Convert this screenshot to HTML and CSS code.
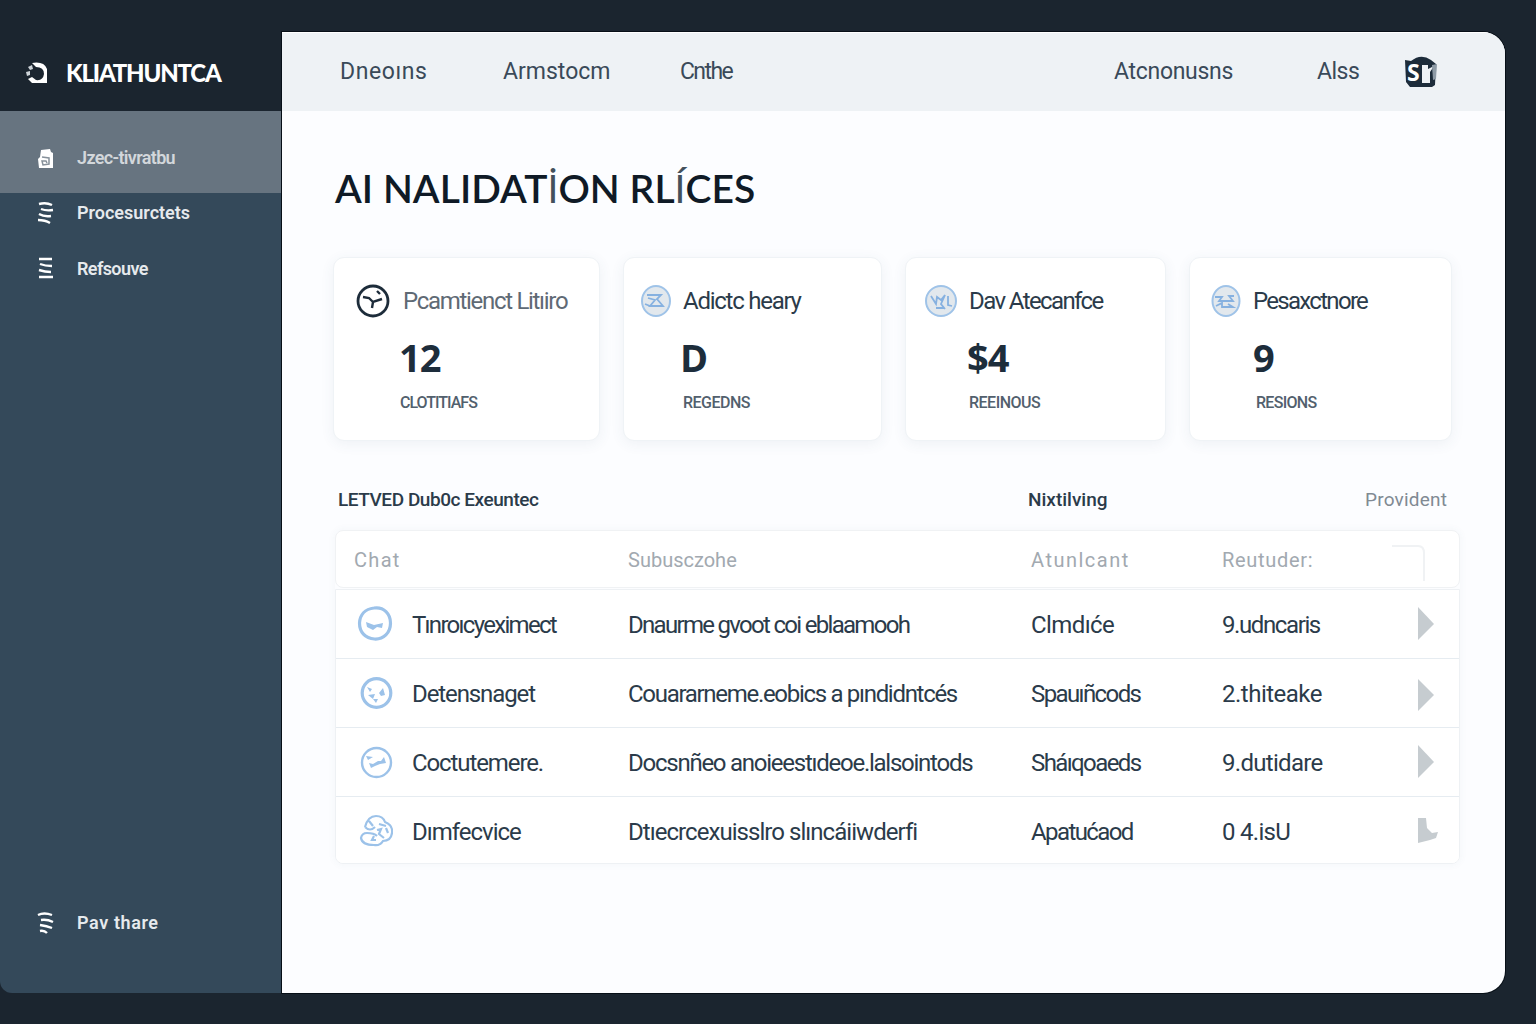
FILE: index.html
```html
<!DOCTYPE html>
<html lang="en">
<head>
    <meta charset="UTF-8">
    <meta name="viewport" content="width=device-width, initial-scale=1.0">
    <title>AI Nalidation</title>
    <link rel="stylesheet" href="styles.css">
</head>
<body>
    <div class="app">
        <aside class="sidebar">
            <div class="brand">
                <svg class="brand-icon" width="22" height="24" viewBox="0 0 22 24"><path fill="#fff" d="M6 2q12-2 15 6v14H6l-4-4 4-2 4 3q7 1 8-6 0-7-8-7z"/><path fill="#cdd3d8" d="m2 6 4-2 1 4-3 1zM0 11l4-1v4l-3 1z"/></svg>
                <span class="brand-name">KLIATHUNTCA</span>
            </div>
            <nav class="menu">
                <a class="menu-item active">
                    <svg width="18" height="22" viewBox="0 0 18 22"><path fill="#fff" d="M4 3 13 2l1 3 2 1v15H2l-1-9 2-2z"/><path fill="none" stroke="#87919b" stroke-width="1.5" d="M5 10l7 1v6l-6 1-1-4h4l1 2"/></svg>
                    <span class="t-user">Jzec-tivratbu</span>
                </a>
                <a class="menu-item">
                    <svg width="18" height="24" viewBox="0 0 18 24"><path class="wave" d="M2 3q7-2 13 1M4 8q5 2 12 1M2 13q5 3 12 2M1 19q7 0 12 3"/></svg>
                    <span class="t-proc">Procesurctets</span>
                </a>
                <a class="menu-item">
                    <svg width="18" height="24" viewBox="0 0 18 24"><path class="wave" d="M2 2h13M3 7q5 2 12 2M2 13q6 2 12 2M2 20h14"/></svg>
                    <span class="t-ref">Refsouve</span>
                </a>
                <a class="menu-item bottom">
                    <svg width="18" height="24" viewBox="0 0 18 24"><path class="wave" d="M1 4q6-3 14 0M4 9q6-1 12 2M3 14q7 1 12 3M3 20q4-1 7 2"/></svg>
                    <span class="t-pay">Pav thare</span>
                </a>
            </nav>
        </aside>

        <div class="window">
            <header class="topbar">
                <a class="nav-1">Dneoıns</a>
                <a class="nav-2">Armstocm</a>
                <a class="nav-3">Cnthe</a>
                <a class="nav-4">Atcnonusns</a>
                <a class="nav-5">Alss</a>
                <svg class="avatar" width="34" height="32" viewBox="0 0 34 32"><path fill="#1d2c3a" d="M1 4 7 5q10-8 20-1l5 4-1 21-3 2H6l-4-5z"/><text x="3" y="25" class="avatar-text">S</text><path fill="#eef2f5" d="M18 9h6v4l6-3-4 6v11h-8z"/><path fill="#8e9ba6" d="m28 9 5-1-1 15-3 1z"/></svg>
            </header>

            <main class="content">
                <h1>AI NALIDAT<span class="thin">İ</span>ON RL<span class="thin">Í</span>CES</h1>

                <section class="cards">
                    <div class="card">
                        <div class="card-head">
                            <svg width="34" height="34" viewBox="0 0 34 34"><circle cx="17" cy="17" r="15" fill="none" stroke="#1d2c3a" stroke-width="2.8"/><path fill="none" stroke="#1d2c3a" stroke-width="2.4" d="m7 13 6 1 4 4 9-3M17 18l-1 6M21 7l3 3"/></svg>
                            <span class="c-1 soft">Pcamtienct Litıiro</span>
                        </div>
                        <div class="value">12</div>
                        <div class="unit u-1">CLOTITIAFS</div>
                    </div>
                    <div class="card">
                        <div class="card-head">
                            <svg width="32" height="34" viewBox="0 0 32 34"><ellipse class="disc" cx="16" cy="17" rx="14" ry="15"/><path class="mark" d="M7 11h14l-4 4 6 7H10l5-6-7-2M5 20l5 2"/></svg>
                            <span class="c-2">Adictc heary</span>
                        </div>
                        <div class="value v-2">D</div>
                        <div class="unit u-2">REGEDNS</div>
                    </div>
                    <div class="card">
                        <div class="card-head">
                            <svg width="34" height="34" viewBox="0 0 34 34"><circle class="disc" cx="17" cy="17" r="15"/><path class="mark" d="m7 12 5 8 1-7 4 3 4-5-4 9 4 5M24 12v9l4 1M12 24h8"/></svg>
                            <span class="c-3">Dav Atecanfce</span>
                        </div>
                        <div class="value">$4</div>
                        <div class="unit u-3">REEINOUS</div>
                    </div>
                    <div class="card">
                        <div class="card-head">
                            <svg width="32" height="34" viewBox="0 0 32 34"><ellipse class="disc" cx="16" cy="17" rx="13.500" ry="15"/><path class="mark" d="M5 13h7l-3 4h14l-4-5h5M6 22l6-3v4h11l-5-3"/></svg>
                            <span class="c-4">Pesaxctnore</span>
                        </div>
                        <div class="value">9</div>
                        <div class="unit u-4">RESIONS</div>
                    </div>
                </section>

                <div class="section-head">
                    <h2 class="s-1">LETVED Dub0c Exeuntec</h2>
                    <h2 class="s-2">Nixtilving</h2>
                    <span class="s-3">Provident</span>
                </div>

                <section class="table">
                    <div class="row head">
                        <span class="h-1">Chat</span>
                        <span class="h-2">Subusczohe</span>
                        <span class="h-3">Atunlcant</span>
                        <span class="h-4">Reutuder:</span>
                        <svg class="corner" width="38" height="44" viewBox="0 0 38 44"><path fill="none" stroke="#f0f2f4" stroke-width="2" d="M0 8h26q6 0 6 7v28"/></svg>
                    </div>
                    <div class="rows">
                        <div class="row">
                            <div class="name">
                                <svg width="36" height="36" viewBox="0 0 36 36"><path class="ring" d="M17 2C27 .5 33.500 8 33.500 17c0 10-7 16.500-16 16C8 32.500 2.500 26 2.500 17 3 9 8 3 17 2z"/><path class="blob" d="m9 16 8 3 9-2-1 5-5-1-4 3-6-3z"/></svg>
                                <span class="a-1">Tınroıcyeximect</span>
                            </div>
                            <span class="b-1">Dnaurme gvoot coi eblaamooh</span>
                            <span class="d-1">Clmdıće</span>
                            <span class="e-1">9.udncaris</span>
                            <svg class="arrow" width="22" height="34" viewBox="0 0 22 34"><path d="M2 0v33l16-16z"/></svg>
                        </div>
                        <div class="row">
                            <div class="name">
                                <svg width="36" height="36" viewBox="0 0 36 36"><circle class="ring" cx="19.500" cy="18" r="14.300"/><path class="blob" d="m10 12 5 2-2 3zM11 20l7-1-2 5zM16 24h5l-2 4zM22 18l4-5 2 7-4 1z"/></svg>
                                <span class="a-2">Detensnaget</span>
                            </div>
                            <span class="b-2">Couararneme.eobics a pındidntcés</span>
                            <span class="d-2">Spauıñcods</span>
                            <span class="e-2">2.thiteake</span>
                            <svg class="arrow low" width="22" height="34" viewBox="0 0 22 34"><path d="M2 1v32l16-16z"/></svg>
                        </div>
                        <div class="row">
                            <div class="name">
                                <svg width="36" height="36" viewBox="0 0 36 36"><circle class="ring thin-ring" cx="19.500" cy="18.500" r="14.500"/><path class="blob" d="m9 12 7 1-5 3zM12 19l4 1 5-3h3l3-4 2 6-6 1-5 2-4 2z"/></svg>
                                <span class="a-3">Coctutemere.</span>
                            </div>
                            <span class="b-3">Docsnñeo anoieestıdeoe.lalsointods</span>
                            <span class="d-3">Sháıqoaeds</span>
                            <span class="e-3">9.dutidare</span>
                            <svg class="arrow" width="22" height="34" viewBox="0 0 22 34"><path d="M2 0v33l16-16z"/></svg>
                        </div>
                        <div class="row">
                            <div class="name">
                                <svg width="36" height="36" viewBox="0 0 36 36"><path class="ring small-ring" d="M8 14Q11 3 19 3q7 0 9 6 8 3 7 11-1 8-9 8-3 5-9 4-12 0-13-7 1-5 6-5 7 0 10 3M8 14q5 5 10 0M12 8l4 5M22 11l7 2M20 17l4-1-2 5 5 4M29 15l2 5M17 23l-2 4h4"/></svg>
                                <span class="a-4">Dımfecvice</span>
                            </div>
                            <span class="b-4">Dtıecrcexuisslro slıncáiiwderfi</span>
                            <span class="d-4">Apatućaod</span>
                            <span class="e-4">0 4.isU</span>
                            <svg class="arrow" width="22" height="34" viewBox="0 0 22 34"><path d="M2 4h8l1 10 5 5 6-1-2 6-6 2-12 3z"/></svg>
                        </div>
                    </div>
                </section>
            </main>
        </div>
    </div>
</body>
</html>
```

FILE: styles.css
```css
* {
    box-sizing: border-box;
}
body {
    margin: 0;
    height: 1024px;
    background: #1b252f;
    font-family: Roboto, "Liberation Sans", sans-serif;
    color: #2b3b4a;
    overflow: hidden;
}
.app {
    display: flex;
    width: 1505px;
    height: 993px;
    padding-top: 32px;
}
svg {
    display: block;
    flex: none;
}
span, a {
    white-space: nowrap;
}

/* sidebar */
.sidebar {
    width: 282px;
    display: flex;
    flex-direction: column;
}
.brand {
    height: 79px;
    display: flex;
    align-items: center;
    padding: 2px 0 0 26px;
    gap: 18px;
}
.brand-name {
    font-family: Lato, sans-serif;
    font-size: 24px;
    font-weight: 900;
    letter-spacing: -1.2px;
    color: #fff;
}
.menu {
    flex: 1;
    display: flex;
    flex-direction: column;
    gap: 16px;
    background: #34495a;
    border-bottom-left-radius: 12px;
}
.menu-item {
    height: 40px;
    padding-left: 37px;
    display: flex;
    align-items: center;
    gap: 22px;
    color: #e6eaed;
    font-size: 18px;
    font-weight: 600;
}
.menu-item span {
    padding-bottom: 2px;
}
.menu-item.active {
    height: 82px;
    padding-top: 12px;
    margin-bottom: -16px;
    background: #677480;
    color: #d3d7db;
}
.menu-item.bottom {
    margin-top: auto;
    margin-bottom: 50px;
}
.t-user { letter-spacing: -0.65px; }
.t-ref { letter-spacing: -0.6px; }
.t-pay { letter-spacing: 0.6px; }
.wave {
    fill: none;
    stroke: #fff;
    stroke-width: 2.4;
}

/* window */
.window {
    flex: 1;
    background: #fcfdff;
    border-radius: 0 22px 22px 0;
    box-shadow: 0 0 0 1px #070f17;
    overflow: hidden;
}
.topbar {
    height: 79px;
    background: #eef2f5;
    border-top: 1px solid #fff;
    display: grid;
    grid-template-columns: 163px 177px 434px 203px 87px 34px;
    align-items: center;
    padding: 0 0 1px 58px;
    font-size: 23px;
    color: #3a4a59;
}
.nav-1 { letter-spacing: 0.6px; }
.nav-3 { letter-spacing: -1.6px; }
.nav-4 { letter-spacing: -0.3px; }
.nav-5 { letter-spacing: -0.5px; }
.avatar-text {
    font-family: "Open Sans", sans-serif;
    font-weight: 700;
    font-size: 23px;
    fill: #fff;
}
.content {
    padding: 52px 0 0 51px;
}
h1 {
    margin: 0;
    height: 94px;
    padding-left: 2px;
    font-family: Lato, sans-serif;
    font-size: 39px;
    font-weight: 600;
    line-height: 51px;
    letter-spacing: 0.05px;
    color: #0f1a26;
    white-space: nowrap;
}
.thin {
    font-weight: 400;
    color: #43505c;
}

/* cards */
.cards {
    display: grid;
    grid-template-columns: 267px 259px 261px 263px;
    column-gap: 23px;
    height: 184px;
}
.card {
    background: #fff;
    border: 1px solid #eff3f6;
    border-radius: 11px;
    box-shadow: 0 3px 14px rgba(60, 90, 120, 0.07);
    padding: 26px 0 0 18px;
}
.card:first-child {
    padding-left: 22px;
}
.card:nth-child(2) {
    padding-left: 16px;
}
.card:last-child {
    padding-left: 20px;
}
.card-head {
    display: flex;
    align-items: center;
    height: 34px;
    font-size: 24px;
}
.card-head span {
    margin-left: 11px;
}
.card .soft {
    margin-left: 13px;
    color: #5f6a75;
}
.c-1 { letter-spacing: -1.3px; }
.c-2 { letter-spacing: -1.25px; }
.c-3 { letter-spacing: -1.6px; }
.c-4 { letter-spacing: -1.7px; }
.disc {
    fill: #e2e8ed;
    stroke: #9fc3e8;
    stroke-width: 2;
}
.mark {
    fill: none;
    stroke: #86b1e0;
    stroke-width: 1.8;
}
.value {
    margin: 11px 0 0 43px;
    font-family: "Open Sans", sans-serif;
    font-size: 38px;
    font-weight: 700;
    line-height: 56px;
    height: 56px;
    letter-spacing: -1px;
    color: #1d2d3b;
}
.v-2 {
    margin-left: 40px;
}
.unit {
    margin-left: 44px;
    margin-top: 8px;
    font-size: 16px;
    line-height: 20px;
    font-weight: 500;
    color: #52606d;
}
.u-1 { letter-spacing: -1px; }
.u-2 { letter-spacing: -0.5px; margin-left: 43px; }
.u-3 { letter-spacing: -0.5px; margin-left: 45px; }
.u-4 { letter-spacing: -0.7px; margin-left: 46px; }

/* table */
.section-head {
    height: 89px;
    display: grid;
    grid-template-columns: 690px 337px auto;
    padding: 47px 0 0 5px;
    line-height: 24px;
    font-size: 19px;
}
.section-head h2 {
    margin: 0;
    font-size: 19px;
    font-weight: 500;
    white-space: nowrap;
}
.section-head .s-1 {
    letter-spacing: -0.45px;
}
.s-3 {
    color: #808a93;
    letter-spacing: 0.2px;
}
.table {
    width: 1125px;
    margin-left: 2px;
    font-size: 24px;
    border-radius: 8px;
    box-shadow: 0 0 8px rgba(60, 90, 120, 0.05);
}
.row {
    display: grid;
    grid-template-columns: 292px 403px 191px 194px auto;
    align-items: center;
    height: 69px;
    background: #fff;
    border-bottom: 1px solid #e6ecf1;
}
.head {
    height: 58px;
    border: 1px solid #f0f2f4;
    border-radius: 8px;
    font-size: 20px;
    padding-top: 2px;
    margin-bottom: 1px;
    color: #a2a9b0;
}
.h-1 {
    padding-left: 18px;
    letter-spacing: 1.3px;
}
.h-3 { letter-spacing: 1.5px; }
.h-4 { letter-spacing: 0.7px; }
.corner {
    margin-left: -24px;
}
.rows {
    border: 1px solid #eef1f4;
    border-radius: 0 0 8px 8px;
    overflow: hidden;
    height: 275px;
}
.rows .row > span, .name span {
    padding-top: 1px;
}
.rows .row:last-child {
    border: 0;
    height: 68px;
}
.name {
    display: flex;
    align-items: center;
    padding-left: 21px;
}
.name span {
    margin-left: 19px;
}
.a-1 { letter-spacing: -1.7px; }
.a-2 { letter-spacing: -1.1px; }
.a-3 { letter-spacing: -1.1px; }
.a-4 { letter-spacing: -1px; }
.b-1 { letter-spacing: -1.7px; }
.b-2 { letter-spacing: -1.3px; }
.b-3 { letter-spacing: -1.25px; }
.b-4 { letter-spacing: -0.95px; }
.d-1 { letter-spacing: -0.6px; }
.d-2, .d-3, .d-4 { letter-spacing: -1.6px; }
.e-1 { letter-spacing: -1.4px; }
.e-2 { letter-spacing: -0.5px; }
.e-3, .e-4 { letter-spacing: -0.7px; }
.ring {
    fill: none;
    stroke: #9cc2e9;
    stroke-width: 3.2;
}
.thin-ring {
    stroke-width: 2.4;
}
.small-ring {
    stroke-width: 2.2;
}
.blob {
    fill: #9cc2e9;
}
.arrow {
    fill: #c6ccd0;
}
.arrow.low {
    margin-top: 4px;
}
```
